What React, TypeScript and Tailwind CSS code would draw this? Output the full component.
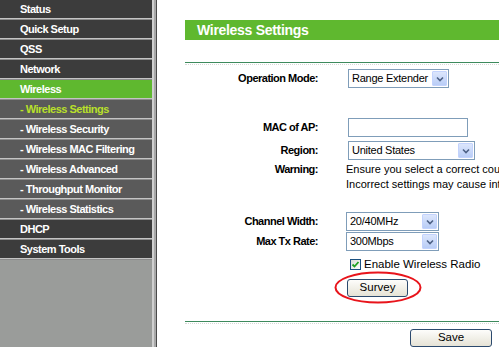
import React from "react";

const menu: { label: string; kind: "main" | "sub" | "active" | "current" }[] = [
  { label: "Status", kind: "main" },
  { label: "Quick Setup", kind: "main" },
  { label: "QSS", kind: "main" },
  { label: "Network", kind: "main" },
  { label: "Wireless", kind: "active" },
  { label: "- Wireless Settings", kind: "current" },
  { label: "- Wireless Security", kind: "sub" },
  { label: "- Wireless MAC Filtering", kind: "sub" },
  { label: "- Wireless Advanced", kind: "sub" },
  { label: "- Throughput Monitor", kind: "sub" },
  { label: "- Wireless Statistics", kind: "sub" },
  { label: "DHCP", kind: "main" },
  { label: "System Tools", kind: "main" },
];

function MenuItem({ label, kind }: { label: string; kind: string }) {
  const bg =
    kind === "active"
      ? "bg-[#5fb82f]"
      : kind === "main"
      ? "bg-[#3c3c3c]"
      : "bg-[#5a5a5a]";
  const color = kind === "current" ? "text-[#b9e02a]" : "text-white";
  return (
    <div className="flex flex-col">
      <div
        className={`h-[18px] flex items-center pl-[20px] ${bg} ${color} text-[11px] font-bold tracking-[-0.5px] leading-none whitespace-nowrap`}
      >
        {label}
      </div>
      <div className="h-px bg-[#c4c4c4]" />
      <div className="h-px bg-[#8c8c8c]" />
    </div>
  );
}

function Select({ value, width }: { value: string; width: number }) {
  return (
    <div
      className="h-[19px] flex items-stretch border border-[#7f9db9] bg-white"
      style={{ width }}
    >
      <div className="flex-1 flex items-center pl-[3px] text-[11px] tracking-[-0.25px] text-black leading-none whitespace-nowrap overflow-hidden">
        {value}
      </div>
      <div className="w-[15px] m-px flex items-center justify-center bg-gradient-to-b from-[#dce6fc] to-[#b9cdf6] border border-[#c3d3fd] rounded-[1px]">
        <svg width="8" height="6" viewBox="0 0 8 6">
          <path d="M1 1.5 L4 4.5 L7 1.5" stroke="#4d6185" strokeWidth="1.6" fill="none" />
        </svg>
      </div>
    </div>
  );
}

function Label({ children }: { children: React.ReactNode }) {
  return (
    <div className="w-[133px] shrink-0 text-right text-[11px] font-bold tracking-[-0.5px] text-black leading-none whitespace-nowrap">
      {children}
    </div>
  );
}

function XPButton({ children, width }: { children: React.ReactNode; width: number }) {
  return (
    <div
      className="h-[18px] flex items-center justify-center border border-[#2c4a6e] rounded-[3px] bg-gradient-to-b from-[#fdfdfb] to-[#e6e3d6] text-[11.5px] text-black leading-none"
      style={{ width }}
    >
      {children}
    </div>
  );
}

export default function App() {
  return (
    <div
      className="relative w-[499px] h-[347px] overflow-hidden bg-white flex"
      style={{ fontFamily: '"Liberation Sans", Arial, sans-serif' }}
    >
      {/* Sidebar */}
      <div className="w-[152px] shrink-0 flex flex-col bg-[#9a9c9a]">
        {menu.map((m) => (
          <MenuItem key={m.label} label={m.label} kind={m.kind} />
        ))}
      </div>
      <div className="w-[2px] bg-[#d0d0d0]" />
      <div className="w-[2px] bg-[#a8a8a8]" />
      <div className="w-px bg-[#4a4a4a]" />

      {/* Content */}
      <div className="flex-1 min-w-0 flex flex-col pl-[28px] pt-[20px]">
        <div className="h-[20px] bg-[#5fb82f] flex items-center pl-[12px] text-white font-bold text-[14px] tracking-[-0.3px] leading-none">
          Wireless Settings
        </div>
        <div className="mt-[22px] h-px bg-[#3d8a5c]" />
        <div className="mt-px h-px border-t border-dotted border-[#d8d8d8]" />

        {/* Operation mode */}
        <div className="mt-[4px] h-[19px] flex items-center">
          <Label>Operation Mode:</Label>
          <div className="ml-[30px]">
            <Select value="Range Extender" width={101} />
          </div>
        </div>

        {/* MAC */}
        <div className="mt-[30px] h-[19px] flex items-center">
          <Label>MAC of AP:</Label>
          <div className="ml-[30px] w-[120px] h-[19px] border border-[#7f9db9] bg-white" />
        </div>

        {/* Region */}
        <div className="mt-[4px] h-[19px] flex items-center">
          <Label>Region:</Label>
          <div className="ml-[30px]">
            <Select value="United States" width={127} />
          </div>
        </div>

        {/* Warning */}
        <div className="mt-[2px] flex items-start">
          <div className="pt-[2px]">
            <Label>Warning:</Label>
          </div>
          <div className="ml-[28px] min-w-0 overflow-hidden text-[11px] leading-[15px] text-black whitespace-nowrap">
            <div>Ensure you select a correct country to conform local law.</div>
            <div>Incorrect settings may cause interference.</div>
          </div>
        </div>

        {/* Channel width */}
        <div className="mt-[20px] h-[19px] flex items-center">
          <Label>Channel Width:</Label>
          <div className="ml-[28px]">
            <Select value="20/40MHz" width={93} />
          </div>
        </div>

        {/* Max Tx */}
        <div className="mt-px h-[19px] flex items-center">
          <Label>Max Tx Rate:</Label>
          <div className="ml-[28px]">
            <Select value="300Mbps" width={93} />
          </div>
        </div>

        {/* Checkbox */}
        <div className="mt-[7px] h-[13px] flex items-center pl-[165px]">
          <div className="w-[11px] h-[11px] border border-[#1c5180] bg-gradient-to-br from-[#dcdcd7] to-white flex items-center justify-center">
            <svg width="9" height="9" viewBox="0 0 9 9">
              <path d="M1.5 4.5 L3.5 6.5 L7.5 2" stroke="#21a121" strokeWidth="1.8" fill="none" />
            </svg>
          </div>
          <div className="ml-[3px] text-[11.5px] leading-none text-black whitespace-nowrap">
            Enable Wireless Radio
          </div>
        </div>

        {/* Survey */}
        <div className="mt-[8px] flex pl-[162px]">
          <XPButton width={61}>Survey</XPButton>
        </div>

        <div className="mt-[24px] h-px bg-[#3d8a5c]" />
        <div className="mt-px h-px border-t border-dotted border-[#d8d8d8]" />

        <div className="mt-[5px] flex justify-end pr-[7px]">
          <XPButton width={82}>Save</XPButton>
        </div>
      </div>

      {/* Red annotation ellipse */}
      <svg
        className="absolute left-[330px] top-[268px]"
        width="96"
        height="40"
        viewBox="0 0 96 40"
      >
        <ellipse cx="48" cy="19.5" rx="42.5" ry="15" stroke="#e8141b" strokeWidth="2" fill="none" />
      </svg>
    </div>
  );
}
